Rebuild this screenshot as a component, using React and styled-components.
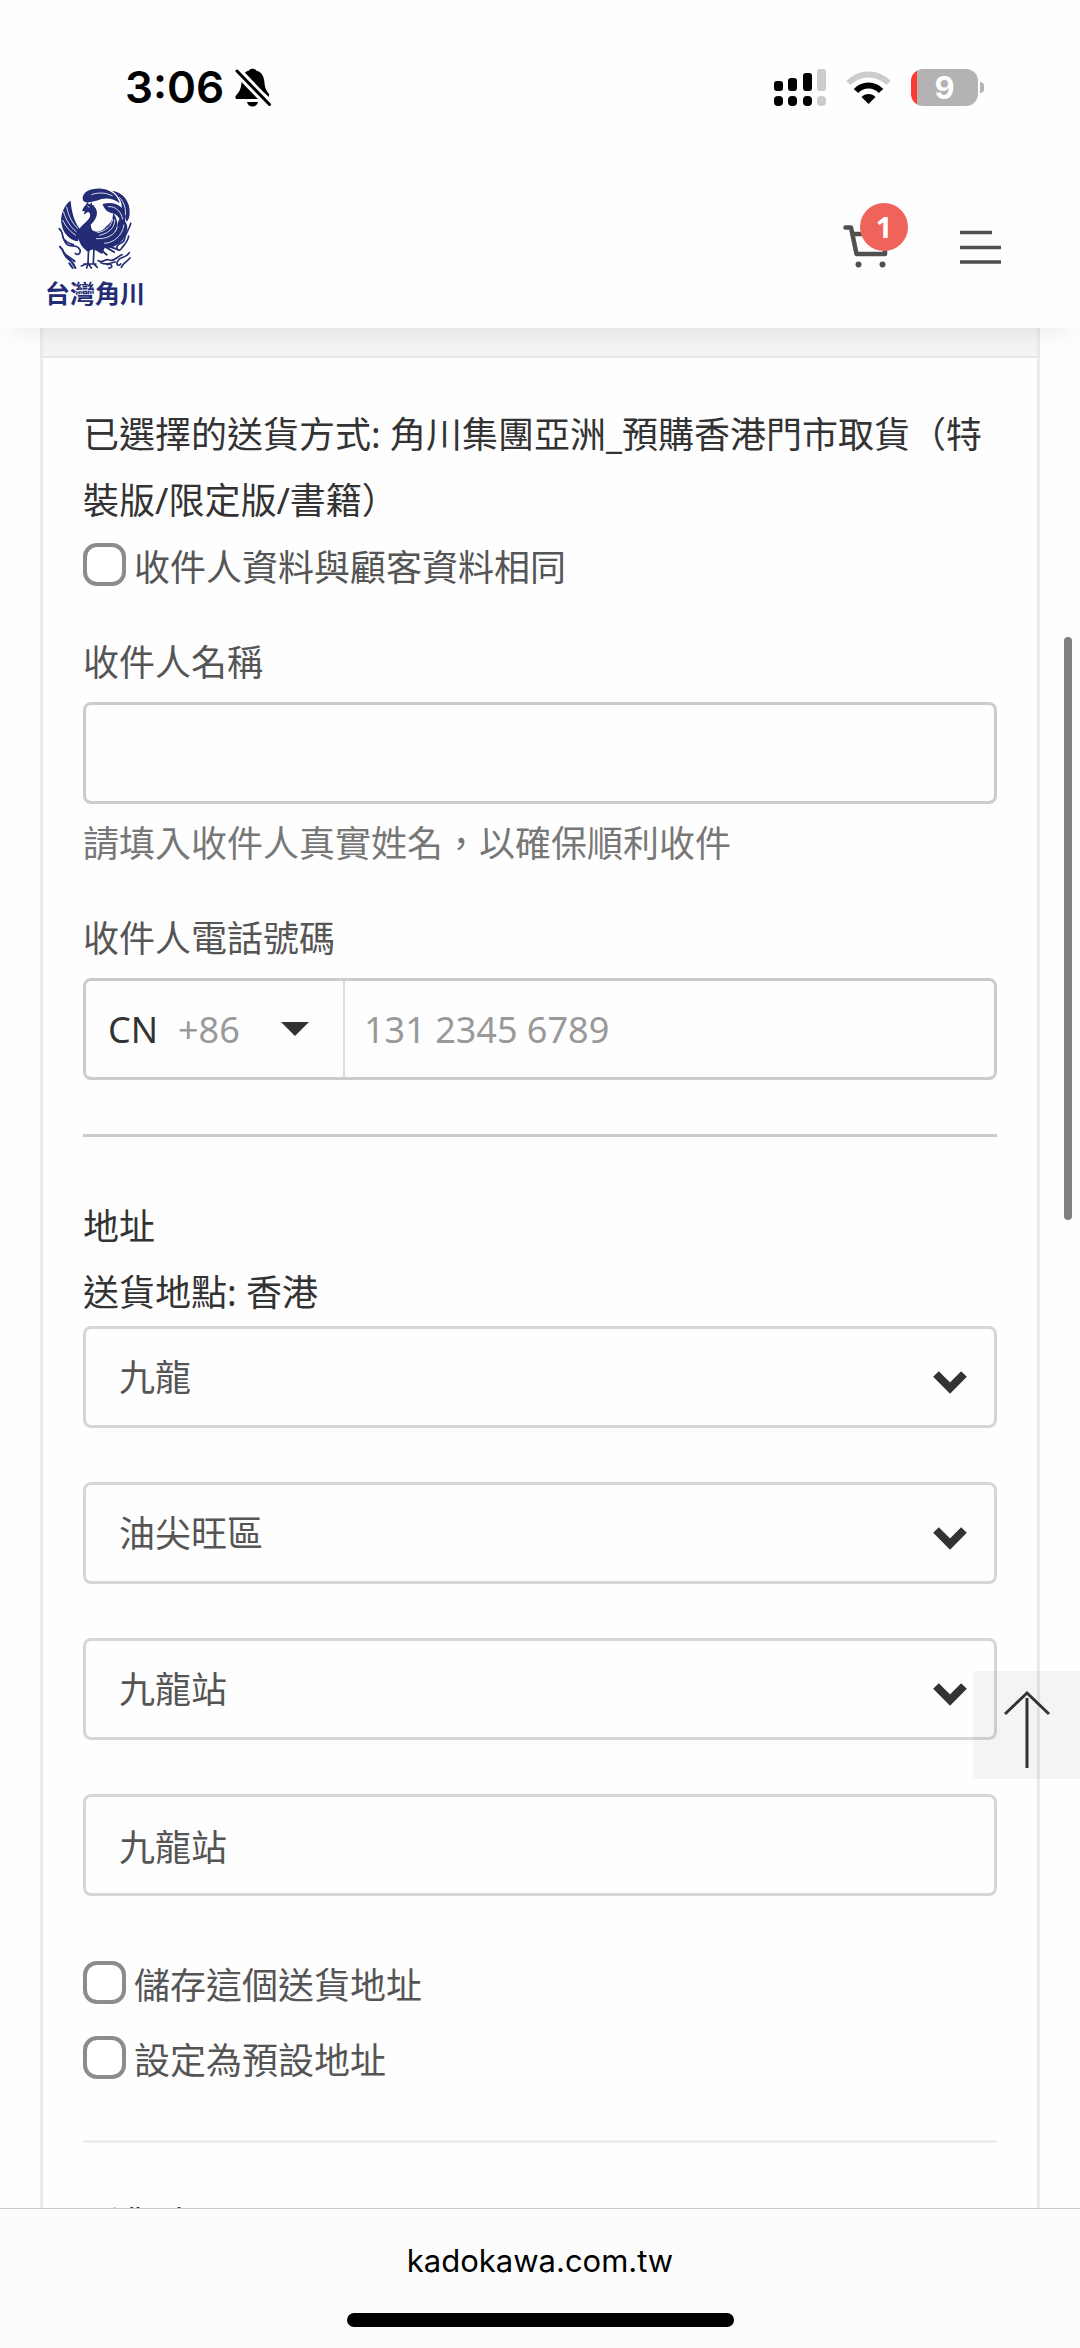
import React, { useState } from 'react'
import styled, { createGlobalStyle } from 'styled-components'

const GlobalStyle = createGlobalStyle`
    * {
        box-sizing: border-box;
    }

    body {
        margin: 0;
        background: #fefefe;
        color: #333;
        font-family: "Noto Sans", "Noto Sans CJK TC", sans-serif;
        font-size: 36px;
        line-height: 67px;
    }
`;

const Screen = styled.div`
    display: flex;
    flex-direction: column;
    height: 100vh;
    overflow: hidden;
`;

const StatusBar = styled.div`
    display: flex;
    align-items: center;
    justify-content: space-between;
    flex: none;
    height: 175px;
    padding: 0 96px 0 125px;
    color: #000;
`;

const Time = styled.div`
    display: flex;
    align-items: center;
    gap: 11px;
    font-family: Inter, sans-serif;
    font-size: 44px;
    font-weight: 600;
`;

const StatusIcons = styled.div`
    display: flex;
    align-items: center;
    gap: 20px;
`;

const Battery = styled.div`
    display: flex;
    align-items: center;
    gap: 2px;
`;

const BatteryBody = styled.div`
    width: 67px;
    height: 37px;
    border-radius: 12px;
    background: linear-gradient(to right, #ff3b30 6px, #b3b3b3 6px);
    color: #fff;
    font-family: Inter, sans-serif;
    font-size: 31px;
    font-weight: 700;
    line-height: 37px;
    text-align: center;
`;

const BatteryCap = styled.div`
    width: 4px;
    height: 11px;
    border-radius: 0 6px 6px 0;
    background: #b3b3b3;
`;

const Header = styled.header`
    position: relative;
    z-index: 1;
    display: flex;
    justify-content: space-between;
    flex: none;
    height: 153px;
    padding: 9px 79px 0 45px;
    background: #fefefe;
    box-shadow: 0 16px 24px -12px rgba(0, 0, 0, 0.08);
`;

const Logo = styled.a`
    display: flex;
    flex-direction: column;
    align-items: center;
    color: #232c75;
    font-family: "Noto Sans CJK TC", sans-serif;
    font-size: 25px;
    font-weight: 700;
    line-height: 32px;
    text-decoration: none;
`;

const Actions = styled.div`
    display: flex;
    align-items: flex-start;
    gap: 52px;
    padding-top: 19px;
`;

const IconButton = styled.button`
    position: relative;
    display: flex;
    align-items: flex-end;
    height: 66px;
    padding: 0;
    border: 0;
    background: none;
    color: #505050;
`;

const CartBadge = styled.span`
    position: absolute;
    left: 17px;
    top: 0;
    width: 48px;
    height: 48px;
    border-radius: 50%;
    background: #f0635a;
    color: #fff;
    font-family: "Noto Sans", sans-serif;
    font-size: 29px;
    font-weight: 700;
    line-height: 48px;
    text-align: center;
`;

const Content = styled.main`
    flex: 1;
    min-height: 0;
    padding: 0 40px;
    overflow: hidden;
`;

const Card = styled.section`
    border: solid #ebebeb;
    border-width: 0 3px;
`;

const CardHeading = styled.div`
    height: 30px;
    border-bottom: 2px solid #e8e8e8;
    background: #f4f4f4;
`;

const CardBody = styled.form`
    padding: 44px 40px 0;
`;

const Text = styled.p`
    margin: 0;
    line-height: 66px;
`;

const CheckLabel = styled.label`
    display: flex;
    align-items: center;
    gap: 8px;
    color: #555;
`;

const Checkbox = styled.input`
    appearance: none;
    width: 43px;
    height: 43px;
    margin: 0 0 6px;
    border: 4px solid #8c8c8c;
    border-radius: 14px;
    background: #fff;

    &:checked {
        background: #8c8c8c;
    }
`;

const CheckList = styled.div`
    display: flex;
    flex-direction: column;
    gap: 8px;
    padding: 56px 0 46px;
`;

const Field = styled.div`
    display: flex;
    flex-direction: column;
    gap: 6px;
    padding-top: 28px;
`;

const FieldLabel = styled.label`
    color: #555;
`;

const Help = styled.span`
    color: #777;
`;

const TextInput = styled.input`
    width: 100%;
    height: 102px;
    padding: 0 33px;
    border: 3px solid ${props => props.$light ? '#d6d6d6' : '#ccc'};
    border-radius: 8px;
    background: #fefefe;
    color: #555;
    font: inherit;
`;

const PhoneBox = styled.div`
    display: flex;
    height: 102px;
    border: 3px solid #ccc;
    border-radius: 8px;
`;

const Country = styled.div`
    display: grid;
    grid-template-columns: 92px 1fr auto;
    align-items: center;
    width: 259px;
    border-right: 2px solid #ddd;

    > * {
        grid-row: 1;
    }
`;

const CountrySelect = styled.select`
    grid-column: 1 / -1;
    appearance: none;
    width: 100%;
    height: 96px;
    padding: 0 0 0 22px;
    border: 0;
    background: none;
    color: #333;
    font: inherit;
`;

const DialCode = styled.span`
    grid-column: 2;
    color: #999;
    pointer-events: none;
`;

const Triangle = styled.svg`
    grid-column: 3;
    margin-right: 34px;
    pointer-events: none;
`;

const PhoneInput = styled.input`
    flex: 1;
    min-width: 0;
    padding: 0 19px;
    border: 0;
    background: none;
    color: #555;
    font: inherit;

    &::placeholder {
        color: #999;
        opacity: 1;
    }
`;

const Divider = styled.hr`
    margin: ${props => props.$light ? '0 0 49px' : '54px 0 57px'};
    border: 0;
    border-top: 3px solid ${props => props.$light ? '#eee' : '#ccc'};
`;

const AddressFields = styled.div`
    display: flex;
    flex-direction: column;
    gap: 54px;
`;

const SelectBox = styled.div`
    display: grid;
    align-items: center;

    > * {
        grid-area: 1 / 1;
    }
`;

const Select = styled.select`
    appearance: none;
    width: 100%;
    height: 102px;
    padding: 0 90px 0 33px;
    border: 3px solid #d6d6d6;
    border-radius: 8px;
    background: #fefefe;
    color: #555;
    font: inherit;
`;

const Chevron = styled.svg`
    justify-self: end;
    margin: 10px 29px 0 0;
    pointer-events: none;
`;

const BackToTop = styled.button`
    position: fixed;
    right: 0;
    bottom: 569px;
    display: flex;
    justify-content: center;
    width: 107px;
    height: 108px;
    padding: 18px 0 0;
    border: 0;
    background: rgba(0, 0, 0, 0.04);
    color: #333;
`;

const ScrollThumb = styled.div`
    position: fixed;
    right: 8px;
    top: 637px;
    width: 8px;
    height: 583px;
    border-radius: 4px;
    background: #7f7f7f;
`;

const BrowserBar = styled.footer`
    display: flex;
    flex-direction: column;
    align-items: center;
    justify-content: space-between;
    flex: none;
    height: 140px;
    padding: 28px 0 21px;
    border-top: 1px solid #ccc;
    background: #fcfcfc;
    color: #000;
    font-family: Inter, sans-serif;
    font-size: 31px;
    line-height: 48px;
`;

const HomeIndicator = styled.div`
    width: 387px;
    height: 14px;
    border-radius: 7px;
    background: #000;
`;

const BellOff = () => (
    <svg width="36" height="39" viewBox="0 0 36 39" fill="currentColor">
        <path d="M8 7 C10 4 12 3 14 2.500 C15 0 20 0 21 2.500 C28 4 29 10 29.500 15 C30 20 31 22 34 26 L34 29 Z" />
        <path d="M6.500 14 L23 31 L2 31 C0 31 0 29 1 27.500 C4 24 6 22 6.500 14 Z" />
        <path d="M12 34 L23 34 C22 40 13 40 12 34 Z" />
        <path d="M3 2.500 L35 36" stroke="#fefefe" strokeWidth="7" />
        <path d="M2 3 L34.500 36.500" stroke="currentColor" strokeWidth="3" strokeLinecap="round" />
    </svg>
)

const Signal = () => (
    <svg width="52" height="37" viewBox="0 0 52 37">
        <rect x="0" y="12" width="9" height="10" rx="3" />
        <rect x="14" y="9" width="9" height="13" rx="3" />
        <rect x="29" y="4" width="9" height="18" rx="3" />
        <rect x="43" y="0" width="9" height="22" rx="3" fill="#ccc" />
        <rect x="0" y="27" width="9" height="10" rx="4" />
        <rect x="14" y="27" width="9" height="10" rx="4" />
        <rect x="29" y="27" width="9" height="10" rx="4" />
        <rect x="43" y="27" width="9" height="10" rx="4" fill="#ccc" />
    </svg>
)

const Wifi = () => (
    <svg width="45" height="34" viewBox="0 0 45 34" fill="none">
        <path d="M2.500 12 C13 .5 32 .5 42.500 12" stroke="#ccc" strokeWidth="6" />
        <path d="M10 20 C16.500 12.500 28.500 12.500 35 20" stroke="#000" strokeWidth="6" />
        <path d="M15.500 26 C19 22 26 22 29.500 26 L22.500 33 Z" fill="#000" />
    </svg>
)

const Phoenix = () => (
    <svg width="82" height="92" viewBox="0 0 246 276" fill="currentColor">
        <path d="M86 46 C84 24 110 12 142 14 C174 17 192 36 197 58 C182 44 158 40 140 46 C118 54 90 62 86 46 Z" />
        <path d="M174 20 C210 26 228 54 227 86 C227 100 223 108 217 114 C216 100 212 88 202 78 C208 58 196 36 174 20 Z" />
        <path d="M146 60 C182 50 210 66 214 94 C217 110 210 120 204 124 C200 108 192 92 176 88 C162 86 150 76 146 60 Z" />
        <path d="M197 104 C210 106 220 114 220 132 C216 170 188 192 154 192 C134 190 120 182 114 166 C150 176 184 158 190 128 C190 120 192 112 197 104 Z" />
        <path d="M177 86 C206 124 184 168 130 172 C110 172 106 156 114 138 C130 150 150 138 158 126 C172 116 178 102 177 86 Z" />
        <path d="M50 50 C32 60 18 92 22 116 C26 148 46 168 72 172 L82 138 C64 124 52 84 50 50 Z" />
        <path d="M88 72 C94 58 116 58 126 74 C134 92 124 108 110 122 C112 146 134 164 152 192 L144 210 C126 200 116 188 104 204 C90 196 70 176 72 146 C74 126 102 114 108 98 C110 90 106 84 101 84 L90 92 L92 82 L84 80 Z" />
        <path d="M94 66 L100 54 L106 62 L114 54 L114 64 L122 64 L112 74 Z" />
        <g fill="none" stroke="#fefefe" strokeWidth="2.500">
            <path d="M112 32 C134 24 158 26 176 36" />
            <path d="M196 40 C212 56 216 76 214 94 M162 68 C186 66 202 84 206 106" />
            <path d="M28 82 C36 108 48 128 68 144 M38 68 C42 94 56 120 72 134 M26 108 C36 130 50 144 66 154" />
            <path d="M182 106 C184 130 164 148 136 154 M176 104 C174 124 156 142 130 146 M190 128 C184 154 156 166 126 164" />
            <path d="M116 136 L126 128 L134 138 L144 122 L152 132" />
            <path d="M210 122 C206 154 178 178 150 178" />
            <path d="M100 66 L106 70" />
        </g>
        <g fill="none" stroke="currentColor" strokeLinecap="round">
            <path d="M104 184 L102 238 M120 190 L118 238" strokeWidth="5" />
            <path d="M82 246 L102 238 L98 252 M102 238 L112 252 M118 238 L130 250 M90 240 L126 240" strokeWidth="5" />
            <path d="M120 180 L158 212 M136 178 L180 204 M150 182 L190 196" strokeWidth="6" />
            <path d="M16 134 C30 146 22 162 36 178 C48 192 60 180 72 190 C86 202 74 218 64 208 M26 160 C34 174 44 178 58 182" strokeWidth="5" />
            <path d="M18 188 C32 200 26 212 42 224 C56 232 58 240 64 252 M28 204 C38 220 54 222 62 232 M46 238 L56 252" strokeWidth="6" />
            <path d="M230 118 C226 138 214 146 212 164 C210 180 196 174 190 186 C184 196 196 204 202 194 C208 184 222 174 224 156" strokeWidth="5" />
            <path d="M226 206 C216 224 200 216 192 230 C184 242 194 248 200 240 M228 222 C214 238 208 236 202 250 M132 230 C146 240 152 222 166 228 C182 234 188 218 204 212 M140 236 C154 246 170 236 184 234 M160 242 C176 236 178 254 164 252" strokeWidth="5" />
        </g>
    </svg>
)

const Cart = () => (
    <svg width="65" height="66" viewBox="0 0 65 66" fill="none" stroke="currentColor" strokeWidth="4.500" strokeLinecap="round" strokeLinejoin="round">
        <path d="M2.500 24.500 H8 L13.500 51 H42 V47 M10 31 H42" />
        <circle cx="15.500" cy="61.500" r="3" fill="currentColor" stroke="none" />
        <circle cx="39.500" cy="61.500" r="3" fill="currentColor" stroke="none" />
    </svg>
)

const Menu = () => (
    <svg width="41" height="40" viewBox="0 0 41 40" stroke="currentColor" strokeWidth="3.500">
        <path d="M0 3.500 H32 M0 18.500 H41 M0 33 H41" />
    </svg>
)

const regions = [
    { name: 'region', label: '地區', value: '九龍' },
    { name: 'district', label: '分區', value: '油尖旺區' },
    { name: 'station', label: '站點', value: '九龍站' },
]

const App = () => {
    const [name, setName] = useState('')
    const [phone, setPhone] = useState('')
    const [address, setAddress] = useState('九龍站')

    return (
        <Screen>
            <GlobalStyle />
            <StatusBar>
                <Time>3:06<BellOff /></Time>
                <StatusIcons>
                    <Signal />
                    <Wifi />
                    <Battery>
                        <BatteryBody>9</BatteryBody>
                        <BatteryCap />
                    </Battery>
                </StatusIcons>
            </StatusBar>
            <Header>
                <Logo href="/">
                    <Phoenix />
                    台灣角川
                </Logo>
                <Actions>
                    <IconButton type="button" aria-label="購物車">
                        <Cart />
                        <CartBadge>1</CartBadge>
                    </IconButton>
                    <IconButton type="button" aria-label="選單">
                        <Menu />
                    </IconButton>
                </Actions>
            </Header>
            <Content>
                <Card>
                    <CardHeading />
                    <CardBody>
                        <Text>已選擇的送貨方式: 角川集團亞洲_預購香港門市取貨（特裝版/限定版/書籍）</Text>
                        <CheckLabel>
                            <Checkbox type="checkbox" />
                            收件人資料與顧客資料相同
                        </CheckLabel>
                        <Field>
                            <FieldLabel htmlFor="name">收件人名稱</FieldLabel>
                            <TextInput id="name" value={name} onChange={e => setName(e.target.value)} />
                            <Help>請填入收件人真實姓名，以確保順利收件</Help>
                        </Field>
                        <Field>
                            <FieldLabel htmlFor="phone">收件人電話號碼</FieldLabel>
                            <PhoneBox>
                                <Country>
                                    <CountrySelect aria-label="國碼">
                                        <option>CN</option>
                                    </CountrySelect>
                                    <DialCode>+86</DialCode>
                                    <Triangle width="28" height="14" viewBox="0 0 28 14">
                                        <path d="M0 0 H28 L14 14 Z" fill="#333" />
                                    </Triangle>
                                </Country>
                                <PhoneInput
                                    id="phone"
                                    type="tel"
                                    placeholder="131 2345 6789"
                                    value={phone}
                                    onChange={e => setPhone(e.target.value)} />
                            </PhoneBox>
                        </Field>
                        <Divider />
                        <Text>地址</Text>
                        <Text>送貨地點: 香港</Text>
                        <AddressFields>
                            {
                                regions.map(item => (
                                    <SelectBox key={item.name}>
                                        <Select name={item.name} aria-label={item.label}>
                                            <option>{item.value}</option>
                                        </Select>
                                        <Chevron width="36" height="24" viewBox="0 0 36 24">
                                            <path d="M4 4 L18 18 L32 4" fill="none" stroke="#333" strokeWidth="8" />
                                        </Chevron>
                                    </SelectBox>
                                ))
                            }
                            <TextInput $light aria-label="地址" value={address} onChange={e => setAddress(e.target.value)} />
                        </AddressFields>
                        <CheckList>
                            <CheckLabel>
                                <Checkbox type="checkbox" />
                                儲存這個送貨地址
                            </CheckLabel>
                            <CheckLabel>
                                <Checkbox type="checkbox" />
                                設定為預設地址
                            </CheckLabel>
                        </CheckList>
                        <Divider $light />
                        <Text>到貨時間</Text>
                    </CardBody>
                </Card>
            </Content>
            <BackToTop type="button" aria-label="回到頂部">
                <svg width="48" height="80" viewBox="0 0 48 80" fill="none" stroke="currentColor" strokeWidth="3">
                    <path d="M2 25 L24 4 L46 25 M24 9 V79" />
                </svg>
            </BackToTop>
            <ScrollThumb />
            <BrowserBar>
                <span>kadokawa.com.tw</span>
                <HomeIndicator />
            </BrowserBar>
        </Screen>
    );
}

export default App;
